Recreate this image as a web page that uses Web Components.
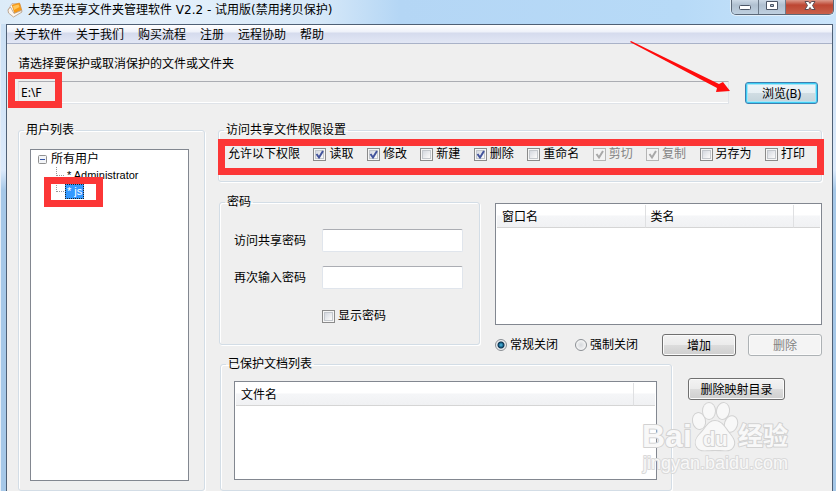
<!DOCTYPE html>
<html lang="zh-CN">
<head>
<meta charset="utf-8">
<title>大势至共享文件夹管理软件</title>
<style>
body { margin: 0; min-height: 100vh; background: #efefef; color: #000; overflow: hidden;
  font: 12px/16px "Noto Sans", "Noto Sans CJK SC", sans-serif; }
</style>
</head>
<body>
<app-window></app-window>

<script>
const define = (name, html, setup) => {
  const tpl = document.createElement('template');
  tpl.innerHTML = html;
  customElements.define(name, class extends HTMLElement {
    connectedCallback() {
      if (this.shadowRoot) return;
      const root = this.attachShadow({ mode: 'open' });
      root.append(tpl.content.cloneNode(true));
      if (setup) setup(this, root);
    }
  });
};

define('title-bar', `
<style>
:host { display: flex; align-items: flex-start; height: 24px; padding: 0 2px 0 7px; overflow: hidden;
  background: linear-gradient(90deg, #dcebf8 0, #e6f1fb 150px, #d6e8f8 320px, #b4d6f5 400px, #b7daf7 680px, #cbe5fb 100%); }
svg { display: block; }
.icon { margin: 2px 5px 0 0; }
h1 { margin: 2px 0 0; font-family: "DejaVu Sans", "Noto Sans CJK SC", sans-serif; font-size: 12px; line-height: 16px; font-weight: 400; flex: 1; white-space: nowrap; }
.ctl { display: flex; height: 14px; border: 1px solid #5b6878; border-top: 0; border-radius: 0 0 5px 5px; overflow: hidden; box-shadow: 0 0 0 1px #e3eff9; }
button { border: 0; padding: 0; margin: 0; width: 27px; height: 14px; display: grid; place-items: center;
  background: linear-gradient(#ccd9e6 0, #b0c0d0 5px, #bfd0e0 100%); border-right: 1px solid #6c7a8a; }
button.x { width: 47px; border-right: 0; background: linear-gradient(#dc9a8c 0, #bd4633 5px, #c9604a 100%); }
</style>
<svg class="icon" width="16" height="16" viewBox="0 0 16 16"><path d="M1 8 L5 1.500 L13 2 L15 9 L6 14 Z" fill="#fff" stroke="#b9a596" stroke-width=".7"/><path d="M5 3 L12.500 1 L14.500 8 L7.500 11 Z" fill="#f99a12" stroke="#e08a1e" stroke-width=".6"/><path d="M6 4 L11.500 2.500 L12.500 5 L7 8 Z" fill="#ffc65c"/><path d="M1 8 L3.500 5 L7 11.500 L14.500 8.500 L15 10 L6.500 15 L1.500 11 Z" fill="#fdf6ef" stroke="#a98c70" stroke-width=".7"/></svg>
<h1>大势至共享文件夹管理软件 V2.2 - 试用版(禁用拷贝保护)</h1>
<div class="ctl">
<button aria-label="最小化"><svg width="14" height="12"><rect x="1.500" y="4.500" width="11" height="4" rx="1" fill="#fff" stroke="#4c5666"/></svg></button>
<button aria-label="最大化"><svg width="14" height="12"><path fill-rule="evenodd" d="M1.500 .5h11v8h-11z M5.500 3.500v2h3v-2z" fill="#fff" stroke="#4c5666"/></svg></button>
<button class="x" aria-label="关闭"><svg width="14" height="12"><path d="M2 .5h3.500L7 2.500 8.500 .5H12L9.500 4.500l2.500 4H8.500L7 6.500 5.500 8.500H2l2.500-4z" fill="#fff" stroke="#5c4a52"/></svg></button>
</div>`);

define('menu-bar', `
<style>
:host { display: block; height: 18px; border-bottom: 1px solid #a9b2c8; background: linear-gradient(#fff 0, #eef1f9 7px, #d5dbed 8px, #e2e7f5 100%); }
nav { display: flex; gap: 14px; padding: 0 7px; }
a { color: inherit; text-decoration: none; white-space: nowrap; line-height: 20px; }
</style>
<nav><a href="#">关于软件</a><a href="#">关于我们</a><a href="#">购买流程</a><a href="#">注册</a><a href="#">远程协助</a><a href="#">帮助</a></nav>`);

define('group-box', `
<style>
:host { display: block; }
fieldset { box-sizing: border-box; height: 100%; margin: 0; padding: 0; min-width: 0; border: 1px solid #d3dde6; border-radius: 3px; box-shadow: inset 1px 1px #fff, 1px 1px #fff; }
legend { margin-left: 5px; padding: 0 2px; line-height: 16px; }
</style>
<fieldset><legend></legend><slot></slot></fieldset>`,
(el, root) => root.querySelector('legend').textContent = el.getAttribute('label'));

define('check-box', `
<style>
:host { display: inline-flex; }
label { display: flex; align-items: center; gap: 3px; white-space: nowrap; }
input { appearance: none; margin: 0; width: 13px; height: 13px; border: 1px solid #8a8a8a; box-shadow: inset 0 0 0 1px #f6f6f6, inset 0 0 0 2px #c3c7cc;
  background: linear-gradient(135deg, #c9ced8, #f8f8f8 75%); display: grid; place-items: center; }
svg { grid-area: 1/1; pointer-events: none; display: none; }
.box { display: grid; }
.box input { grid-area: 1/1; }
input:checked + svg { display: block; }
path { fill: none; stroke: #43549c; stroke-width: 2; }
:host([disabled]) { color: #838383; }
:host([disabled]) input { border-color: #b5b5b5; box-shadow: none; background: #f3f3f3; }
:host([disabled]) path { stroke: #a8a8a8; }
</style>
<label><span class="box"><input type="checkbox"><svg width="13" height="13"><path d="M3.500 6 L6 9.500 L10 3"/></svg></span><slot></slot></label>`,
(el, root) => { const i = root.querySelector('input'); i.checked = el.hasAttribute('checked'); i.disabled = el.hasAttribute('disabled'); });

define('push-button', `
<style>
:host { display: block; }
button { display: block; box-sizing: border-box; width: 100%; height: 22px; padding: 1px 0 0; font: inherit; line-height: 20px; color: #000; border: 1px solid #707070; border-radius: 3px;
  background: linear-gradient(#f3f3f3 0, #ebebeb 50%, #dcdcdc 51%, #cfcfcf 100%); box-shadow: inset 0 0 0 1px #fbfbfb; }
button:disabled { color: #838383; border-color: #adb2b5; background: #f4f4f4; }
:host([primary]) button { border-color: #3c7fb1; box-shadow: inset 0 0 0 1px #3fd0f5, inset 0 0 0 2px #a8e4f7; background: linear-gradient(#eef5f8 0, #e6eff3 50%, #d0dde3 51%, #c3d3da 100%); }
</style>
<button><slot></slot></button>`,
(el, root) => root.querySelector('button').disabled = el.hasAttribute('disabled'));

define('user-tree', `
<style>
:host { display: block; box-sizing: border-box; background: #fff; border: 1px solid #828790; padding: 1px 7px; }
ul { list-style: none; margin: 0; padding: 0; }
.root { display: flex; align-items: center; gap: 4px; }
.root svg { display: block; }
li li { display: flex; align-items: center; height: 16px; padding-left: 18px; font-family: "Liberation Sans", sans-serif; font-size: 11px; }
li li::before { content: ""; width: 7px; height: 8px; margin: 0 1px 8px 0; border: dotted #999; border-width: 0 0 1px 1px; }
li li span { padding: 0 2px; line-height: 15px; white-space: pre; }
.sel { background: #3399ff; color: #fff; outline: 1px dotted #222; outline-offset: -1px; }
</style>
<ul><li><div class="root"><svg width="9" height="9"><rect x=".5" y=".5" width="8" height="8" rx="1" fill="#f3f5f8" stroke="#919191"/><path d="M2 4.500h5" stroke="#3454a5"/></svg>所有用户</div>
<ul><li><span>* Administrator</span></li><li><span class="sel">* js</span></li></ul></li></ul>`);

define('list-table', `
<style>
:host { display: block; box-sizing: border-box; background: #fff; border: 1px solid #828790; padding: 1px; }
table { width: 100%; table-layout: fixed; border-collapse: separate; border-spacing: 0; }
th { height: 23px; padding: 2px 0 0 5px; font-weight: 400; text-align: left; border-right: 1px solid #dfe0e2; border-bottom: 1px solid #d5d5d5; line-height: 16px;
  background: linear-gradient(#fff 0, #fff 45%, #f5f6f8 50%, #f0f1f3 100%); box-sizing: border-box; }
th:last-child { border-right: 0; }
</style>
<table><thead><tr></tr></thead></table>`,
(el, root) => {
  const tr = root.querySelector('tr');
  el.getAttribute('columns').split(',').forEach(c => {
    const [text, width] = c.split(':');
    const th = document.createElement('th');
    th.textContent = text;
    if (width) th.style.width = width;
    tr.append(th);
  });
});

define('radio-group', `
<style>
:host { display: flex; gap: 17px; }
label { display: flex; align-items: center; gap: 3px; white-space: nowrap; }
input { appearance: none; box-sizing: border-box; margin: 0; width: 12px; height: 12px; border: 1px solid #8b8f94; border-radius: 50%; background: radial-gradient(circle, #d5d8dc 0, #f6f6f6 5px); }
input:checked { background: radial-gradient(circle at 5px 5px, #56c0e8 0, #17678f 2px, #0c2f4b 3px, #e8ecef 4px); }
</style>
<label><input type="radio" name="close" checked>常规关闭</label>
<label><input type="radio" name="close">强制关闭</label>`);

define('password-form', `
<style>
:host { display: grid; grid-template-columns: 73px 1fr; column-gap: 15px; row-gap: 14px; padding: 19px 16px 0 14px; align-items: center; }
input { box-sizing: border-box; width: 100%; height: 23px; border: 1px solid #e0e5ec; border-top-color: #abadb3; border-radius: 2px; background: #fff; padding: 0 4px; font: inherit; }
check-box { grid-column: 2; padding-top: 5px; }
label { white-space: nowrap; }
</style>
<label for="a">访问共享密码</label><input id="a" type="password">
<label for="b">再次输入密码</label><input id="b" type="password">
<check-box>显示密码</check-box>`);

define('permission-row', `
<style>
:host { display: flex; justify-content: space-between; align-items: center; padding: 8px 16px 0 9px; white-space: nowrap; }
</style>
<span>允许以下权限</span>
<check-box checked>读取</check-box><check-box checked>修改</check-box><check-box>新建</check-box><check-box checked>删除</check-box><check-box>重命名</check-box>
<check-box checked disabled>剪切</check-box><check-box checked disabled>复制</check-box><check-box>另存为</check-box><check-box>打印</check-box>`);

define('path-picker', `
<style>
:host { display: grid; grid-template-columns: 1fr 73px; column-gap: 16px; row-gap: 9px; padding-right: 4px; }
label { grid-column: 1 / -1; }
input { box-sizing: border-box; width: 100%; height: 23px; border: 1px solid #dfe3e8; border-top-color: #abadb3; background: #efefef; padding: 0 2px; font: inherit; color: #000; box-shadow: inset 0 -1px #fff; }
push-button { padding-top: 1px; }
</style>
<label for="p">请选择要保护或取消保护的文件或文件夹</label>
<input id="p" value="E:\\F" readonly><push-button primary>浏览(B)</push-button>`);

define('site-watermark', `
<style>
:host { display: block; pointer-events: none; }
svg { display: block; }
text { font-family: "Liberation Sans", "Noto Sans CJK SC", sans-serif; }
</style>
<svg width="156" height="76" viewBox="0 0 156 76">
<g fill="#f8f8f8" stroke="#d2d2d2" stroke-width="2" paint-order="stroke" stroke-linejoin="round">
<ellipse cx="58" cy="20" rx="6" ry="8" transform="rotate(-12 58 20)"/><ellipse cx="68" cy="10" rx="6" ry="8"/><ellipse cx="82" cy="10" rx="6" ry="8" transform="rotate(10 82 10)"/><ellipse cx="90" cy="23" rx="6" ry="8" transform="rotate(18 90 23)"/>
<path d="M74 20c-7 0-9 7-14 12s-7 9-4 14 9 3 18 3 15 2 18-3 0-9-4-14-7-12-14-12z"/>
<text x="1" y="46" font-size="32" font-weight="700">Bai</text>
<text x="62" y="45" font-size="20" font-weight="700">du</text>
<text x="97" y="44" font-size="25" font-weight="700">经验</text>
<text x="2" y="68" font-size="18" stroke="#dadada">jingyan.baidu.com</text>
</g></svg>`);

define('call-out', `
<style>
:host { position: absolute; box-sizing: border-box; border: 7px solid #fc3636; pointer-events: none; }
</style>`);

define('app-window', `
<style>
:host { display: block; position: relative; }
.frame { padding: 0 3px 0 6px; background: linear-gradient(90deg, #e6eef7 1px, transparent 1px), linear-gradient(#c8def3 0, #dceafb 170px, #a6c8e8 190px, #a6c8e8 100%); }
title-bar { margin: 0 -3px 0 -6px; }
.client { border: 1px solid #4f6075; border-bottom: 0; background: #efefef; }
main { display: grid; grid-template-columns: 187px minmax(0, 1fr); column-gap: 13px; row-gap: 18px; padding: 12px 10px 0 11px; }
path-picker { grid-column: 1 / -1; }
user-tree { height: 332px; margin: 11px 15px 9px 11px; }
.right { display: flex; flex-direction: column; }
.perm { height: 60px; margin-bottom: 12px; }
.row { display: flex; }
.pw { width: 261px; height: 151px; margin: 0 15px 0 1px; }
.wins { flex: 1; min-width: 0; padding-top: 9px; }
.wins list-table { height: 122px; }
.acts { display: flex; align-items: center; gap: 12px; padding: 9px 0 0; }
.acts radio-group { flex: 1; }
.acts push-button { width: 74px; }
.docs { flex: 1; margin: 0 16px 0 2px; height: 135px; }
.docs list-table { height: 99px; margin: 9px 14px 10px 13px; }
.side { width: 134px; padding-top: 22px; }
.side push-button { width: 97px; }
.path { left: 8px; top: 72px; width: 54px; height: 36px; }
.perms { left: 218px; right: 12px; top: 139px; height: 36px; }
.user { left: 44px; top: 177px; width: 59px; height: 30px; }
.arrow { position: absolute; right: 104px; top: 41px; pointer-events: none; }
site-watermark { position: absolute; right: 39px; top: 401px; }
</style>
<div class="frame">
<title-bar></title-bar>
<div class="client">
<menu-bar></menu-bar>
<main>
<path-picker></path-picker>
<group-box label="用户列表"><user-tree></user-tree></group-box>
<div class="right">
<group-box class="perm" label="访问共享文件权限设置"><permission-row></permission-row></group-box>
<div class="row">
<group-box class="pw" label="密码"><password-form></password-form></group-box>
<div class="wins"><list-table columns="窗口名:46%,类名:46%,"></list-table>
<div class="acts"><radio-group></radio-group><push-button>增加</push-button><push-button disabled>删除</push-button></div></div>
</div>
<div class="row">
<group-box class="docs" label="已保护文档列表"><list-table columns="文件名:95%,"></list-table></group-box>
<div class="side"><push-button>删除映射目录</push-button></div>
</div>
</div>
</main>
</div>
</div>
<site-watermark></site-watermark>
<call-out class="path"></call-out><call-out class="perms"></call-out><call-out class="user"></call-out>
<svg class="arrow" width="102" height="54"><path d="M0 1 L1 0 L89 43 L93 41 L100 50 L86 51 L87 47 Z" fill="#ff0c0c"/></svg>`);
</script>
</body>
</html>
